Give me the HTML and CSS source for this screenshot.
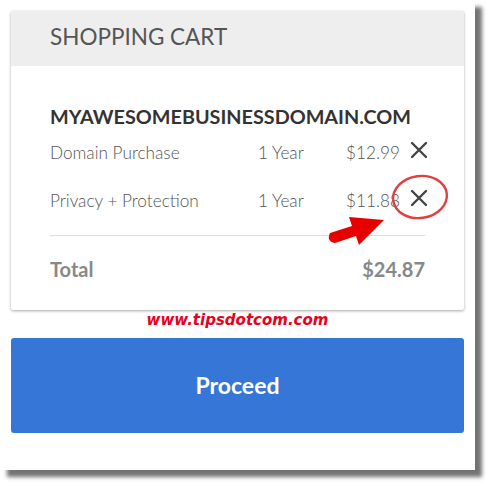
FILE: index.html
```html
<!DOCTYPE html>
<html>
<head>
<meta charset="utf-8">
<link rel="stylesheet" href="styles.css">
</head>
<body>
<div class="page">
<div class="frame">
  <div class="card">
    <div class="card-head">SHOPPING CART</div>
    <div class="card-body">
      <div class="domain">MYAWESOMEBUSINESSDOMAIN.COM</div>
      <div class="row">
        <span class="name">Domain Purchase</span>
        <span class="term">1 Year</span>
        <span class="price">$12.99</span>
        <svg class="x" viewBox="0 0 18 18" width="18" height="18"><path d="M2 2L16 16M16 2L2 16" stroke="#444" stroke-width="2.4" stroke-linecap="round"/></svg>
      </div>
      <div class="row">
        <span class="name">Privacy + Protection</span>
        <span class="term">1 Year</span>
        <span class="price">$11.88</span>
        <svg class="x" viewBox="0 0 18 18" width="18" height="18"><path d="M2 2L16 16M16 2L2 16" stroke="#444" stroke-width="2.4" stroke-linecap="round"/></svg>
      </div>
      <div class="divider"></div>
      <div class="total">
        <span>Total</span>
        <span>$24.87</span>
      </div>
    </div>
  </div>
  <div class="watermark">www.tipsdotcom.com</div>
  <div class="proceed">Proceed</div>
  <svg class="annot" width="475" height="470" viewBox="0 0 475 470">
    <ellipse cx="420" cy="197" rx="27" ry="21" fill="none" stroke="#e04040" stroke-width="2.4" transform="rotate(-8 420 197)"/>
    <path d="M330 233 L352 226 L349 217 L384 220 L359 245 L356 236 L335 243 Q326 241 330 233 Z" fill="#e60000"/>
  </svg>
</div>
</div>
</body>
</html>
```
FILE: styles.css
```css
html, body {
  margin: 0;
  padding: 0;
  background: #fff;
}
.page {
  height: 486px;
  width: 491px;
  overflow: hidden;
}
.frame {
  position: relative;
  width: 475px;
  height: 470px;
  box-sizing: border-box;
  padding: 11px 11px 0 11px;
  background: #fff;
  box-shadow: 7px 7px 4px rgba(0, 0, 0, 0.55);
  font-family: Lato, "Open Sans", sans-serif;
}
.card {
  background: #fff;
  box-shadow: 0 1px 3px rgba(0, 0, 0, 0.35);
  border-radius: 2px;
  height: 299px;
}
.card-head {
  background: #eeeeee;
  height: 55px;
  box-sizing: border-box;
  padding: 12px 0 0 39px;
  font-size: 22.5px;
  color: #555;
  line-height: 28px;
}
.card-body {
  padding: 0 36px 0 39px;
}
.domain {
  margin-top: 38px;
  font-weight: 700;
  font-size: 19.8px;
  line-height: 24px;
  color: #333;
}
.row {
  display: grid;
  grid-template-columns: 208px 88px 64px 18px;
  align-items: center;
  height: 24px;
  margin-top: 12px;
  font-weight: 300;
  font-size: 17.2px;
  color: #555;
}
.row + .row {
  margin-top: 24px;
}
.x {
  display: block;
  margin-top: -4px;
}
.divider {
  margin-top: 23px;
  height: 1px;
  background: #ddd;
  margin-right: 3px;
}
.total {
  display: flex;
  justify-content: space-between;
  margin-top: 21px;
  margin-right: 3px;
  font-weight: 700;
  font-size: 20px;
  line-height: 24px;
  color: #888;
}
.watermark {
  height: 28px;
  text-align: center;
  font-family: "DejaVu Sans", Verdana, sans-serif;
  font-weight: 700;
  font-style: italic;
  font-size: 15px;
  line-height: 20px;
  color: #e8001c;
}
.proceed {
  height: 95px;
  box-sizing: border-box;
  padding-bottom: 2px;
  background: #3676d6;
  border-radius: 3px;
  color: #fff;
  font-weight: 700;
  font-size: 23px;
  display: flex;
  align-items: center;
  justify-content: center;
}
.annot {
  position: absolute;
  left: 0;
  top: 0;
  pointer-events: none;
}
```
